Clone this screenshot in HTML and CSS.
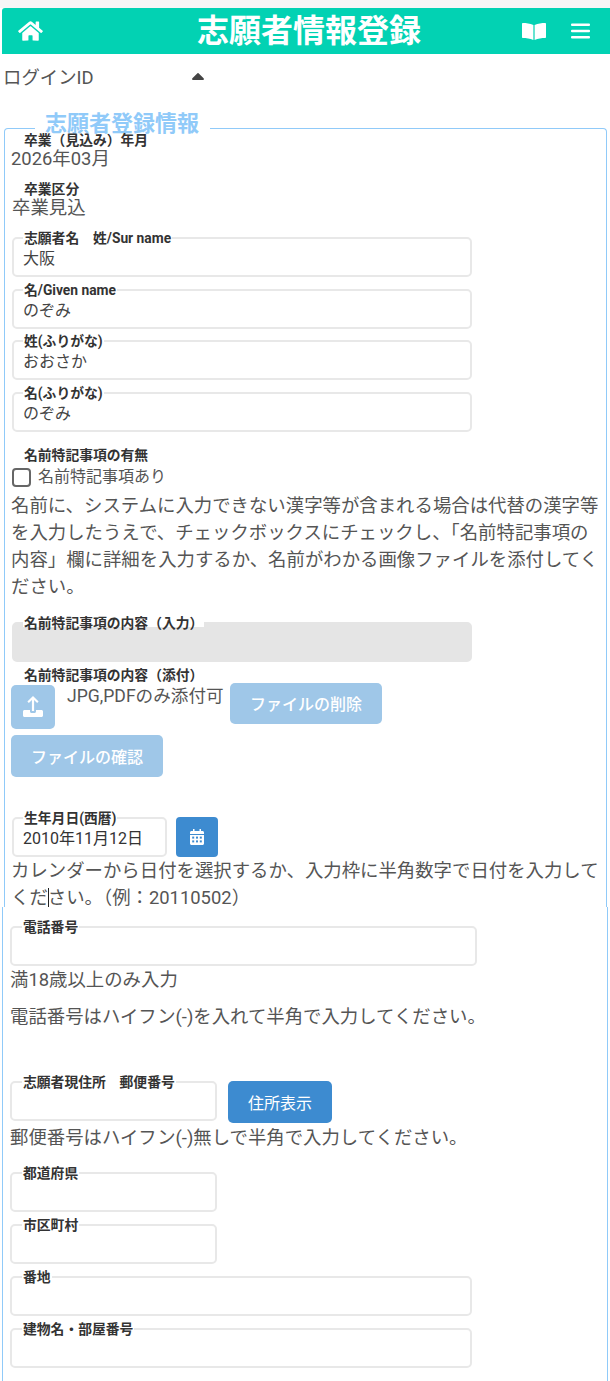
FILE: index.html
```html
<!DOCTYPE html>
<html lang="ja">
<head>
    <meta charset="UTF-8">
    <meta name="viewport" content="width=device-width, initial-scale=1.0">
    <title>志願者情報登録</title>
    <link rel="stylesheet" href="styles.css">
</head>

<body>
    <div class="top-strip"></div>

    <nav class="navbar">
        <a href="#" class="nav-icon nav-home">
            <svg width="25" height="22" viewBox="0 0 576 512" fill="currentColor"><path d="M280.37 148.26L96 300.11V464a16 16 0 0 0 16 16l112.06-.29a16 16 0 0 0 15.92-16V368a16 16 0 0 1 16-16h64a16 16 0 0 1 16 16v95.64a16 16 0 0 0 16 16.05L464 480a16 16 0 0 0 16-16V300L295.67 148.26a12.19 12.19 0 0 0-15.3 0zM571.6 251.47L488 182.56V44.05a12 12 0 0 0-12-12h-56a12 12 0 0 0-12 12v72.61L318.47 43a48 48 0 0 0-61 0L4.34 251.47a12 12 0 0 0-1.6 16.9l25.5 31A12 12 0 0 0 45.15 301l235.22-193.74a12.19 12.19 0 0 1 15.3 0L530.9 301a12 12 0 0 0 16.9-1.6l25.5-31a12 12 0 0 0-1.7-16.93z"/></svg>
        </a>
        <h1 class="nav-title">志願者情報登録</h1>
        <a href="#" class="nav-icon nav-book">
            <svg width="24" height="17" viewBox="0 0 24 17" fill="currentColor"><path d="M1 0C4 0 8 .5 11.400 2V17C8 15.500 4 15 1 15 .4 15 0 14.600 0 14V1C0 .4.4 0 1 0z"/><path d="M23 0C20 0 16 .5 12.600 2V17C16 15.500 20 15 23 15 23.600 15 24 14.600 24 14V1C24 .4 23.600 0 23 0z"/></svg>
        </a>
        <a href="#" class="nav-icon nav-menu">
            <svg width="19" height="16" viewBox="0 0 19 16" fill="currentColor"><rect y="0.5" width="19" height="2.6" rx="1"/><rect y="6.7" width="19" height="2.6" rx="1"/><rect y="12.9" width="19" height="2.6" rx="1"/></svg>
        </a>
    </nav>

    <div class="login-row">
        <span class="login-label">ログインID</span>
        <svg class="login-caret" width="12" height="7" viewBox="0 0 12 7" fill="#444"><path d="M5.2.4.4 5.2C-.2 5.8.2 7 1.1 7h9.8c.9 0 1.3-1.2.7-1.8L6.8.4a1.1 1.1 0 0 0-1.6 0z"/></svg>
    </div>

    <fieldset class="form-section">
        <legend>志願者登録情報</legend>
        <div class="section-body">
            <div class="plain-label">卒業（見込み）年月</div>
            <div class="plain-value">2026年03月</div>
            <div class="plain-label second">卒業区分</div>
            <div class="plain-value shifted">卒業見込</div>

            <div class="field wide first-field">
                <label>志願者名　姓/Sur name</label>
                <input type="text" value="大阪">
            </div>
            <div class="field wide">
                <label>名/Given name</label>
                <input type="text" value="のぞみ">
            </div>
            <div class="field wide">
                <label>姓(ふりがな)</label>
                <input type="text" value="おおさか">
            </div>
            <div class="field wide">
                <label>名(ふりがな)</label>
                <input type="text" value="のぞみ">
            </div>

            <div class="plain-label note-label">名前特記事項の有無</div>
            <label class="check-row"><input type="checkbox"> 名前特記事項あり</label>
            <p class="help-text check-help">名前に、システムに入力できない漢字等が含まれる場合は代替の漢字等を入力したうえで、チェックボックスにチェックし、「名前特記事項の内容」欄に詳細を入力するか、名前がわかる画像ファイルを添付してください。</p>

            <div class="field wide disabled-field">
                <label>名前特記事項の内容（入力）</label>
                <input type="text" disabled>
            </div>

            <div class="plain-label attach-label">名前特記事項の内容（添付）</div>
            <div class="attach-row">
                <button type="button" class="upload-btn">
                    <svg width="20" height="21" viewBox="0 0 20 21" fill="#fff"><path d="M10 0l5.6 5.6-1.5 1.5-3-3V15H8.9V4.100l-3 3-1.500-1.500z"/><path d="M1.500 14H7v1.500c0 .8.700 1.500 1.500 1.500h3c.8 0 1.500-.7 1.500-1.500V14h5.500c.8 0 1.500.7 1.500 1.500v4c0 .8-.7 1.500-1.500 1.500h-17C.7 21 0 20.300 0 19.500v-4C0 14.700.7 14 1.500 14z"/></svg>
                </button>
                <span class="attach-note">JPG,PDFのみ添付可</span>
                <button type="button" class="file-btn">ファイルの削除</button>
            </div>
            <button type="button" class="file-btn confirm-btn">ファイルの確認</button>

            <div class="date-row">
                <div class="field date-field">
                    <label>生年月日(西暦)</label>
                    <input type="text" value="2010年11月12日">
                </div>
                <button type="button" class="calendar-btn">
                    <svg width="14" height="16" viewBox="0 0 14 16"><path fill="#fff" d="M3 0h1.500v2h5V0H11v2h1.500C13.300 2 14 2.700 14 3.500V5H0V3.500C0 2.700.7 2 1.500 2H3z"/><path fill="#fff" d="M0 6h14v8.500c0 .8-.7 1.500-1.500 1.500h-11C.7 16 0 15.300 0 14.500z"/><g fill="#3d8bd0"><rect x="2.200" y="7.600" width="2" height="2"/><rect x="6" y="7.600" width="2" height="2"/><rect x="9.800" y="7.600" width="2" height="2"/><rect x="2.200" y="11.400" width="2" height="2"/><rect x="6" y="11.400" width="2" height="2"/><rect x="9.800" y="11.400" width="2" height="2"/></g></svg>
                </button>
            </div>
            <p class="help-text date-help">カレンダーから日付を選択するか、入力枠に半角数字で日付を入力してくだ<span class="caret"></span>さい。（例：20110502）</p>
        </div>
    </fieldset>

    <section class="form-section-two">
        <div class="field phone-field">
            <label>電話番号</label>
            <input type="text">
        </div>
        <p class="help-text">満18歳以上のみ入力</p>
        <p class="help-text phone-help">電話番号はハイフン(-)を入れて半角で入力してください。</p>

        <div class="zip-row">
            <div class="field short">
                <label>志願者現住所　郵便番号</label>
                <input type="text">
            </div>
            <button type="button" class="address-btn">住所表示</button>
        </div>
        <p class="help-text zip-help">郵便番号はハイフン(-)無しで半角で入力してください。</p>

        <div class="field short pref-field">
            <label>都道府県</label>
            <input type="text">
        </div>
        <div class="field short">
            <label>市区町村</label>
            <input type="text">
        </div>
        <div class="field wide">
            <label>番地</label>
            <input type="text">
        </div>
        <div class="field wide">
            <label>建物名・部屋番号</label>
            <input type="text">
        </div>
    </section>
</body>
</html>
```

FILE: styles.css
```css
body {
    margin: 0;
    background-color: #fff;
    color: #555;
    font-family: Roboto, "Noto Sans CJK JP", sans-serif;
    font-size: 18.4px;
}

.top-strip {
    height: 8px;
    background-color: #f6f6f6;
}

.navbar {
    display: flex;
    align-items: center;
    height: 46px;
    margin-left: 2px;
    background-color: #02d2b3;
    border-radius: 3px 0 0 0;
    color: white;
}

.nav-title {
    flex: 1;
    margin: 0;
    padding-right: 2px;
    font-size: 32px;
    font-weight: bold;
    line-height: 46px;
    text-align: center;
}

.nav-icon {
    display: flex;
    color: white;
}

.nav-home {
    margin-left: 16px;
    margin-right: 83px;
}

.nav-book {
    margin-left: 28px;
}

.nav-menu {
    margin-left: 25px;
    margin-right: 20px;
}

.login-row {
    display: flex;
    align-items: center;
    padding-top: 10px;
    padding-left: 3px;
    line-height: 27px;
}

.login-label {
    width: 189px;
}

.login-caret {
    margin-bottom: 3px;
}

.form-section {
    min-width: 0;
    margin: 15.5px 3px 0 4px;
    padding: 0 5px 0 6px;
    border: 1px solid #90caf9;
    border-bottom: 0;
    border-radius: 4px 4px 0 0;
}

.form-section legend {
    margin-left: 24px;
    padding: 0 11px 10px 10px;
    color: #90caf9;
    font-size: 22px;
    font-weight: bold;
    line-height: 33px;
}

.section-body {
    margin-top: -17.5px;
}

.plain-label {
    padding-left: 13px;
    color: #333;
    font-size: 13.8px;
    font-weight: bold;
    line-height: 16px;
}

.plain-label.second {
    margin-top: 11px;
}

.plain-value {
    line-height: 22px;
}

.plain-value.shifted {
    margin-left: 1px;
}

.field {
    position: relative;
    height: 40px;
    margin-top: 11.7px;
}

.field label {
    position: absolute;
    top: -3px;
    left: 12px;
    padding: 0 1px;
    background-color: #fff;
    color: #333;
    font-size: 13.8px;
    font-weight: bold;
    line-height: 8px;
    white-space: nowrap;
}

.form-section .field label {
    left: 11px;
}

.field input {
    display: block;
    box-sizing: border-box;
    width: 100%;
    height: 100%;
    margin: 0;
    padding: 0 9px;
    background-color: #fff;
    border: 2px solid #e8e8e8;
    border-radius: 5px;
    color: #444;
    font-family: inherit;
    font-size: 16px;
}

.field.wide {
    width: 460px;
    margin-left: 1px;
}

.field.first-field {
    margin-top: 18px;
}

.field.disabled-field {
    margin-top: 22px;
}

.field.disabled-field input {
    background-color: #e5e5e5;
    border-color: #e5e5e5;
}

.note-label {
    margin-top: 15px;
}

.check-row {
    display: flex;
    align-items: center;
    gap: 7px;
    margin: 2px 0 0 1px;
    font-size: 16px;
    line-height: 24px;
}

.check-row input {
    appearance: none;
    width: 19px;
    height: 19px;
    margin: 0;
    border: 2px solid #666;
    border-radius: 4px;
}

.help-text {
    margin: 0;
    line-height: 27px;
}

.check-help {
    margin-top: 2.5px;
}

.attach-label {
    margin-top: 5px;
}

.attach-row {
    display: flex;
    align-items: flex-start;
}

.upload-btn {
    display: flex;
    align-items: center;
    justify-content: center;
    width: 44px;
    height: 44px;
    margin-top: 2px;
    padding: 0 0 1px;
    background-color: #9fc7e8;
    border: 0;
    border-radius: 5px;
}

.attach-note {
    width: 163px;
    margin-left: 12px;
    font-size: 17.6px;
    line-height: 27px;
    white-space: nowrap;
}

.file-btn {
    width: 152px;
    height: 41px;
    padding: 0;
    background-color: #9fc7e8;
    border: 0;
    border-radius: 5px;
    color: white;
    font-family: inherit;
    font-size: 16px;
    font-weight: 500;
}

.confirm-btn {
    display: block;
    height: 42px;
    margin-top: 6px;
}

.date-row {
    display: flex;
    gap: 9px;
    margin: 40px 0 0 1px;
}

.field.date-field {
    width: 155px;
    margin-top: 0;
}

.field.date-field input {
    color: #333;
}

.calendar-btn {
    display: flex;
    align-items: center;
    justify-content: center;
    width: 42px;
    height: 40px;
    padding: 0;
    background-color: #3d8bd0;
    border: 0;
    border-radius: 4px;
}

.date-help {
    margin-bottom: -3.5px;
}

.caret {
    display: inline-block;
    width: 1px;
    height: 20px;
    margin-right: -1px;
    background-color: #222;
    vertical-align: -4px;
}

.form-section-two {
    position: relative;
    margin: 0 2px;
    padding: 19px 0 13px 7px;
    background-color: #fff;
    border-left: 1px solid #90caf9;
    border-right: 1px solid #90caf9;
}

.form-section-two .field.wide {
    width: 462px;
    margin-left: 0;
    margin-top: 12px;
}

.field.short {
    width: 207px;
    margin-top: 12px;
}

.field.phone-field {
    width: 467px;
    height: 39.5px;
    margin-top: 0;
}

.phone-help {
    margin-top: 10px;
}

.zip-row {
    display: flex;
    gap: 11px;
    margin-top: 51.5px;
}

.zip-row .field.short {
    margin-top: 0;
}

.address-btn {
    width: 104px;
    height: 42px;
    padding: 0;
    background-color: #3d8bd0;
    border: 0;
    border-radius: 5px;
    color: white;
    font-family: inherit;
    font-size: 16px;
}

.zip-help {
    margin-top: 1px;
}

.field.short.pref-field {
    margin-top: 20.5px;
}
```
